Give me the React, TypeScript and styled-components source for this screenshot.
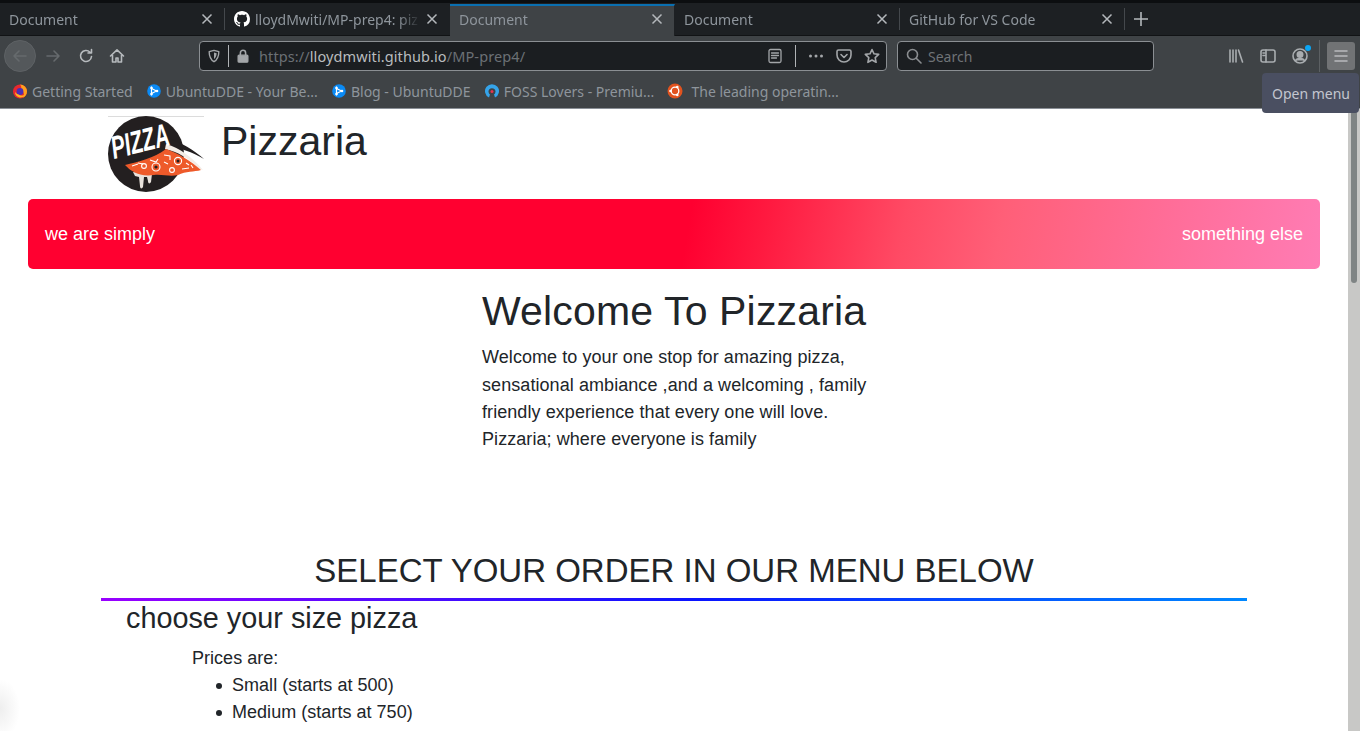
import React from 'react'
import styled, { createGlobalStyle } from 'styled-components'

const GlobalStyle = createGlobalStyle`
  html, body { margin: 0; padding: 0; height: 100%; overflow: hidden; background: #fff; }
  #root { height: 100%; }
  * { box-sizing: border-box; }
`

const Screen = styled.div`
  position: relative;
  width: 1360px;
  height: 731px;
  overflow: hidden;
  display: flex;
  flex-direction: column;
`

/* ---------- browser chrome ---------- */
const Chrome = styled.header`
  flex: none;
  height: 109px;
  background: #3f4346;
  border-bottom: 1px solid #8a8f96;
  font-family: "Noto Sans", sans-serif;
  font-size: 14px;
  color: #8e959c;
`
const TopEdge = styled.div`
  height: 3px;
  background: #0c0e10;
`
const TabStrip = styled.div`
  height: 33px;
  display: flex;
  align-items: flex-start;
  background: #1d2023;
  border-bottom: 1px solid #111315;
`
const Tab = styled.div<{ $active?: boolean; $divided?: boolean }>`
  position: relative;
  flex: none;
  width: 225px;
  height: 32px;
  display: flex;
  align-items: center;
  gap: 5px;
  padding: ${p => (p.$active ? '0 11px 4px 9px' : '0 12px 0 9px')};
  background: ${p => (p.$active ? '#3f4346' : 'transparent')};
  border-top: ${p => (p.$active ? '2px solid #0a6fb0' : 'none')};
  border-right: ${p => (p.$active ? '1px solid #1d2023' : 'none')};
  margin-top: ${p => (p.$active ? '1px' : '0')};
  &::after {
    content: '';
    display: ${p => (p.$divided ? 'block' : 'none')};
    position: absolute;
    right: 0;
    top: 5px;
    bottom: 5px;
    width: 1px;
    background: #44484c;
  }
`
const TabTitle = styled.span`
  flex: 1;
  white-space: nowrap;
  overflow: hidden;
  -webkit-mask-image: linear-gradient(to right, #000 86%, transparent);
  mask-image: linear-gradient(to right, #000 86%, transparent);
`
const CloseIcon = styled.svg`
  flex: none;
  width: 12px;
  height: 12px;
  stroke: #b4b8bc;
  stroke-width: 1.5;
  fill: none;
`
const NewTab = styled.div`
  width: 32px;
  height: 32px;
  display: flex;
  align-items: center;
  justify-content: center;
  svg { width: 16px; height: 16px; stroke: #b4b8bc; stroke-width: 1.6; fill: none; }
`
const Toolbar = styled.div`
  height: 36px;
  display: flex;
  align-items: center;
  padding: 4px 5px 0 4px;
`
const BackCircle = styled.div`
  flex: none;
  width: 32px;
  height: 32px;
  border-radius: 50%;
  background: #54585b;
  border: 1px solid #5e6265;
  display: flex;
  align-items: center;
  justify-content: center;
`
const NavIcon = styled.svg<{ $dim?: boolean }>`
  flex: none;
  width: 16px;
  height: 16px;
  fill: none;
  stroke: ${p => (p.$dim ? '#666a6d' : '#b6babd')};
  stroke-width: 1.6;
  stroke-linecap: round;
  stroke-linejoin: round;
`
const NavSlot = styled.div<{ $w: number }>`
  flex: none;
  width: ${p => p.$w}px;
  display: flex;
  justify-content: center;
`
const UrlBar = styled.div`
  flex: none;
  width: 688px;
  height: 30px;
  margin-left: 66px;
  background: #1b1e21;
  border: 1px solid #8b8f93;
  border-radius: 4px;
  display: flex;
  align-items: center;
  padding: 0 5px 0 7px;
`
const UrlDivider = styled.span`
  flex: none;
  width: 1px;
  height: 22px;
  background: #b0b3b6;
`
const UrlText = styled.span`
  flex: 1;
  font-size: 14.5px;
  color: #6b7075;
  margin-left: 9px;
  white-space: nowrap;
  letter-spacing: 0.1px;
  b { font-weight: 400; color: #b9bcbf; }
`
const SearchBar = styled.div`
  flex: none;
  width: 257px;
  height: 30px;
  margin-left: 10px;
  background: #1b1e21;
  border: 1px solid #8b8f93;
  border-radius: 4px;
  display: flex;
  align-items: center;
  gap: 6px;
  padding: 0 8px;
  color: #6f7377;
`
const ToolGroup = styled.div`
  flex: 1;
  display: flex;
  align-items: center;
  justify-content: flex-end;
  height: 100%;
`
const BadgeWrap = styled.div`
  position: relative;
  display: flex;
`
const Badge = styled.span`
  position: absolute;
  top: -3px;
  right: -3px;
  width: 6px;
  height: 6px;
  border-radius: 50%;
  background: #0aa5f5;
`
const ToolDivider = styled.span`
  width: 1px;
  height: 32px;
  margin-left: 11px;
  background: #5c6063;
`
const MenuButton = styled.div`
  width: 28px;
  height: 28px;
  margin-left: 7px;
  border-radius: 3px;
  background: #717375;
  display: flex;
  align-items: center;
  justify-content: center;
`
const Bookmarks = styled.div`
  height: 36px;
  display: flex;
  align-items: center;
  padding: 2px 0 0 12px;
  gap: 13.2px;
`
const Bookmark = styled.div<{ $gap: number }>`
  display: flex;
  align-items: center;
  gap: ${p => p.$gap}px;
  white-space: nowrap;
  svg { flex: none; width: 16px; height: 16px; }
`
const Tooltip = styled.div`
  position: absolute;
  left: 1262px;
  top: 73px;
  width: 97px;
  height: 40px;
  background: #4a4f61;
  border-radius: 4px;
  color: #c3c6cf;
  font-family: "Noto Sans", sans-serif;
  font-size: 14px;
  display: flex;
  align-items: center;
  padding-left: 10px;
`

/* ---------- page ---------- */
const Viewport = styled.div`
  flex: 1;
  min-height: 0;
  display: flex;
  background: #fff;
`
const Page = styled.main`
  flex: 1;
  min-width: 0;
  overflow: hidden;
  font-family: "Liberation Sans", Arial, sans-serif;
  color: #212529;
`
const Brand = styled.div`
  height: 90px;
  display: flex;
  margin-left: 108px;
  gap: 17px;
`
const Logo = styled.svg`
  flex: none;
  width: 96px;
  height: 78px;
  margin-top: 7px;
  overflow: visible;
`
const BrandName = styled.h1`
  margin: 8px 0 0;
  font-size: 41px;
  font-weight: 400;
  line-height: 48px;
`
const Banner = styled.div`
  height: 70px;
  margin: 0 28px;
  padding: 0 17px;
  border-radius: 5px;
  background: linear-gradient(100deg, #ff0030 0%, #ff0030 51%, #ff1a40 57%, #ff4a64 67.5%, #ff5f78 75%, #ff6d98 87.6%, #ff7cb4 100%);
  display: flex;
  align-items: center;
  justify-content: space-between;
  color: #fff;
  font-size: 18px;
`
const Welcome = styled.section`
  width: 400px;
  margin: 18px 0 0 482px;
`
const WelcomeTitle = styled.h2`
  margin: 0 0 9.3px;
  font-size: 41px;
  font-weight: 400;
  line-height: 48px;
  letter-spacing: 0.15px;
`
const WelcomeText = styled.p`
  margin: 0;
  width: 392px;
  font-size: 18px;
  line-height: 27.3px;
  letter-spacing: 0.07px;
`
const MenuTitle = styled.h2`
  margin: 96.7px 0 0;
  text-align: center;
  font-size: 33px;
  font-weight: 400;
  line-height: 42px;
`
const Rule = styled.div`
  height: 3px;
  margin: 6px 0 0 101px;
  width: 1146px;
  background: linear-gradient(to right, #9900ff, #0a14ff 52%, #0088ff);
`
const SizeTitle = styled.h3`
  margin: 0 0 0 126px;
  font-size: 28.8px;
  font-weight: 400;
  line-height: 34px;
`
const Prices = styled.div`
  margin: 10px 0 0 192px;
  font-size: 18px;
  line-height: 27px;
  letter-spacing: 0.03px;
`
const PriceList = styled.ul`
  margin: 0;
  padding-left: 40px;
  list-style: none;
`
const PriceItem = styled.li`
  position: relative;
  &::before {
    content: '';
    position: absolute;
    left: -16px;
    top: 10.5px;
    width: 6px;
    height: 6px;
    border-radius: 50%;
    background: #212529;
  }
`
const Scrollbar = styled.div`
  flex: none;
  width: 12px;
  background: #c8c8c6;
  padding: 2px 3px 0;
`
const ScrollThumb = styled.div`
  height: 172px;
  border-radius: 3px;
  background: #7f8484;
`
const CornerGlow = styled.div`
  position: absolute;
  left: -20px;
  bottom: -8px;
  width: 40px;
  height: 60px;
  border-radius: 50%;
  background: radial-gradient(closest-side, #eeeeee, #ffffff);
`

const Close = () => (
  <CloseIcon viewBox="0 0 12 12">
    <path d="M1.5 1.5l9 9M10.5 1.5l-9 9" />
  </CloseIcon>
)

const GithubMark = () => (
  <svg viewBox="0 0 16 16" width="16" height="16" fill="#fff" style={{ flex: 'none' }}>
    <path d="M8 0C3.58 0 0 3.58 0 8c0 3.54 2.29 6.53 5.47 7.59.4.07.55-.17.55-.38 0-.19-.01-.82-.01-1.49-2.01.37-2.53-.49-2.69-.94-.09-.23-.48-.94-.82-1.13-.28-.15-.68-.52-.01-.53.63-.01 1.08.58 1.23.82.72 1.21 1.87.87 2.33.66.07-.52.28-.87.51-1.07-1.78-.2-3.64-.89-3.64-3.95 0-.87.31-1.59.82-2.15-.08-.2-.36-1.02.08-2.12 0 0 .67-.21 2.2.82.64-.18 1.32-.27 2-.27s1.36.09 2 .27c1.53-1.04 2.2-.82 2.2-.82.44 1.1.16 1.92.08 2.12.51.56.82 1.27.82 2.15 0 3.07-1.87 3.75-3.65 3.95.29.25.54.73.54 1.48 0 1.07-.01 1.93-.01 2.2 0 .21.15.46.55.38A8.01 8.01 0 0 0 16 8c0-4.42-3.58-8-8-8z" />
  </svg>
)

const Firefox = () => (
  <svg viewBox="0 0 16 16">
    <circle cx="8" cy="8.5" r="7" fill="#e8282e" />
    <path d="M8 1.5a7 7 0 0 1 7 7c0 3-2 5.500-4.500 6.300C13 12 12 8.500 9 7 9.500 5 9.500 3 8 1.500z" fill="#ff9f1c" />
    <circle cx="8" cy="8.500" r="3.400" fill="#4a2fb5" />
    <path d="M3 9c0 3 2.500 5.500 5.500 5.500 2 0 4-1.200 4.500-3-1 1-3 1.500-5 .7C6 11.500 4 10.500 3 9z" fill="#ffb320" />
  </svg>
)

const Deepin = () => (
  <svg viewBox="0 0 16 16">
    <circle cx="8" cy="8" r="6.800" fill="#0a8af5" />
    <path d="M5.500 3.500v9M5.500 5.500l5 2.500-5 2.500" stroke="#fff" strokeWidth="1.200" fill="none" />
    <circle cx="5.500" cy="5" r="1.300" fill="#fff" />
    <circle cx="5.500" cy="11" r="1.300" fill="#fff" />
    <circle cx="11" cy="8" r="1.300" fill="#fff" />
  </svg>
)

const Foss = () => (
  <svg viewBox="0 0 16 16">
    <path d="M5 14.500A7 7 0 1 1 11 14.500L10 11.500A3.500 3.500 0 1 0 6 11.500z" fill="#35a4ea" />
    <circle cx="8" cy="8.500" r="1.500" fill="#e8344e" />
  </svg>
)

const Ubuntu = () => (
  <svg viewBox="0 0 16 16">
    <circle cx="8" cy="8" r="7.500" fill="#e2531f" />
    <circle cx="8" cy="8" r="3.800" fill="none" stroke="#fff" strokeWidth="1.300" />
    <circle cx="3.500" cy="8" r="1.300" fill="#fff" />
    <circle cx="10.300" cy="4" r="1.300" fill="#fff" />
    <circle cx="10.300" cy="12" r="1.300" fill="#fff" />
  </svg>
)

const tabs = ['Document', 'lloydMwiti/MP-prep4: piz', 'Document', 'Document', 'GitHub for VS Code']
const bookmarks = [
  { icon: <Firefox />, label: 'Getting Started', gap: 4 },
  { icon: <Deepin />, label: 'UbuntuDDE - Your Be...', gap: 4 },
  { icon: <Deepin />, label: 'Blog - UbuntuDDE', gap: 4 },
  { icon: <Foss />, label: 'FOSS Lovers - Premiu...', gap: 4 },
  { icon: <Ubuntu />, label: 'The leading operatin...', gap: 8 },
]

const PizzaLogo = () => (
  <Logo viewBox="0 0 96 78">
    <rect x="0" y="0" width="96" height="1" fill="#dcdcdc" />
    <circle cx="38" cy="38" r="38" fill="#231f20" />
    {/* crust tail */}
    <path d="M60 22 C74 27 86 34 96 43 C84 36 72 32 62 30 Z" fill="#231f20" />
    <path d="M58 28 C72 32 85 42 95 54 C92 53 90 52 88 50 C80 42 70 36 57 33 Z" fill="#f3ece6" />
    {/* cheese drips */}
    <path d="M25 56 L44 58 L43 66 C42 68 40 68 40 65 L39 61 L36 61 L35 71 C34 73 32 73 32 70 L31 61 L27 60 Z" fill="#e8e2dc" />
    {/* slice */}
    <path d="M17 49 C30 46 46 42 58 33 C70 37 83 45 93 54 C86 56 78 55 70 59 C62 61 54 58 46 59 C38 60 31 59 26 56 C22 54 20 52 17 49 Z" fill="#ee5a2a" />
    <g fill="none" stroke="#fff" strokeWidth="1.100">
      <circle cx="48" cy="51" r="4" />
      <circle cx="64" cy="54" r="2.400" />
      <circle cx="36" cy="50" r="2.400" />
      <circle cx="70" cy="45" r="3.600" />
      <path d="M24 50l6-2M30 47l5 1M42 44l6 2 2-3M56 39l6 1 0 4M74 53l7-1M83 49l2 3M56 46l4 2M78 47l3 2" />
    </g>
    <g fill="#231f20">
      <circle cx="48" cy="51" r="1.600" />
      <circle cx="70" cy="45" r="1.500" />
    </g>
    <text
      x="6"
      y="43"
      transform="rotate(-14 6 43)"
      fontFamily='"Liberation Sans", Arial, sans-serif'
      fontSize="32"
      fontWeight="700"
      fontStyle="italic"
      fill="#fff"
      textLength="59"
      lengthAdjust="spacingAndGlyphs"
    >
      PIZZA
    </text>
  </Logo>
)

export default function App() {
  return (
    <Screen>
      <GlobalStyle />
      <Chrome>
        <TopEdge />
        <TabStrip>
          {tabs.map((title, i) => (
            <Tab key={i} $active={i === 2} $divided={i !== 2 && i !== 1}>
              {i === 1 && <GithubMark />}
              <TabTitle>{title}</TabTitle>
              <Close />
            </Tab>
          ))}
          <NewTab>
            <svg viewBox="0 0 16 16"><path d="M8 1v14M1 8h14" /></svg>
          </NewTab>
        </TabStrip>
        <Toolbar>
          <BackCircle>
            <NavIcon $dim viewBox="0 0 16 16"><path d="M14 8H2M7 3L2 8l5 5" /></NavIcon>
          </BackCircle>
          <NavSlot $w={34}>
            <NavIcon $dim viewBox="0 0 16 16"><path d="M2 8h12M9 3l5 5-5 5" /></NavIcon>
          </NavSlot>
          <NavSlot $w={31}>
            <NavIcon viewBox="0 0 16 16"><path d="M13.500 8.500A5.500 5.500 0 1 1 12 4.200M13.500 1.500v3.500H10" /></NavIcon>
          </NavSlot>
          <NavSlot $w={32}>
            <NavIcon viewBox="0 0 16 16"><path d="M1.500 8L8 1.800 14.500 8M3.500 7v7h3.500v-4h2v4h3.500V7" /></NavIcon>
          </NavSlot>
          <UrlBar>
            <NavIcon viewBox="0 0 16 16" style={{ width: 14, height: 14, stroke: '#a3a6a9' }}>
              <path d="M8 1.500l5.500 1.500c0 5-1.500 9-5.500 11.500C4 12 2.500 8 2.500 3z" />
              <path d="M8 4l3 .8c0 3-1 5-3 6.700z" fill="#a3a6a9" stroke="none" />
            </NavIcon>
            <UrlDivider style={{ marginLeft: 7 }} />
            <NavIcon viewBox="0 0 16 16" style={{ marginLeft: 7, width: 14, height: 14, stroke: '#a3a6a9', fill: '#a3a6a9' }}>
              <rect x="2.500" y="7" width="11" height="8" rx="1" />
              <path d="M5 7V4.500a3 3 0 0 1 6 0V7" fill="none" strokeWidth="1.800" />
            </NavIcon>
            <UrlText>https://<b>lloydmwiti.github.io</b>/MP-prep4/</UrlText>
            <NavIcon viewBox="0 0 16 16" style={{ stroke: '#a3a6a9', strokeWidth: 1.300 }}>
              <rect x="2" y="1.500" width="12" height="13" rx="1.500" />
              <path d="M4.500 5h7M4.500 7.500h7M4.500 10h5" />
            </NavIcon>
            <UrlDivider style={{ marginLeft: 12, marginRight: 12 }} />
            <svg viewBox="0 0 16 16" width="16" height="16" fill="#a3a6a9" style={{ flex: 'none' }}>
              <circle cx="2.500" cy="8" r="1.500" /><circle cx="8" cy="8" r="1.500" /><circle cx="13.500" cy="8" r="1.500" />
            </svg>
            <NavIcon viewBox="0 0 16 16" style={{ marginLeft: 12, stroke: '#a3a6a9' }}>
              <path d="M2.500 2h11A1.500 1.500 0 0 1 15 3.500V7a7 7 0 0 1-14 0V3.500A1.500 1.500 0 0 1 2.500 2z" />
              <path d="M5 6.500L8 9.500l3-3" />
            </NavIcon>
            <NavIcon viewBox="0 0 16 16" style={{ marginLeft: 12, marginRight: 1, stroke: '#a3a6a9' }}>
              <path d="M8 1.500l2 4.300 4.700.6-3.500 3.200.9 4.700L8 12l-4.100 2.300.9-4.700L1.300 6.400 6 5.800z" />
            </NavIcon>
          </UrlBar>
          <SearchBar>
            <NavIcon viewBox="0 0 16 16" style={{ stroke: '#8a8d90' }}>
              <circle cx="6.500" cy="6.500" r="5" /><path d="M10.500 10.500l4.500 4.500" />
            </NavIcon>
            Search
          </SearchBar>
          <ToolGroup>
            <NavIcon viewBox="0 0 16 16" style={{ stroke: '#a9adb0' }}>
              <path d="M2 2v12M5 2v12M8 2v12M10.500 2l4 12" />
            </NavIcon>
            <NavIcon viewBox="0 0 16 16" style={{ marginLeft: 16, stroke: '#a9adb0' }}>
              <rect x="1" y="2" width="14" height="12" rx="2" /><path d="M6 2v12M3 5h1.500M3 7.500h1.500" />
            </NavIcon>
            <BadgeWrap style={{ marginLeft: 16 }}>
              <NavIcon viewBox="0 0 16 16" style={{ stroke: '#a9adb0' }}>
                <circle cx="8" cy="8" r="7" /><circle cx="8" cy="6.500" r="2.700" fill="#a9adb0" />
                <path d="M3.500 12.500C5 10 11 10 12.500 12.500" fill="#a9adb0" />
              </NavIcon>
              <Badge />
            </BadgeWrap>
            <ToolDivider />
            <MenuButton>
              <NavIcon viewBox="0 0 16 16" style={{ stroke: '#b9bbbd', strokeWidth: 1.500 }}>
                <path d="M2 3h12M2 8h12M2 13h12" />
              </NavIcon>
            </MenuButton>
          </ToolGroup>
        </Toolbar>
        <Bookmarks>
          {bookmarks.map(b => (
            <Bookmark key={b.label} $gap={b.gap}>
              {b.icon}
              {b.label}
            </Bookmark>
          ))}
        </Bookmarks>
      </Chrome>
      <Viewport>
        <Page>
          <Brand>
            <PizzaLogo />
            <BrandName>Pizzaria</BrandName>
          </Brand>
          <Banner>
            <span>we are simply</span>
            <span>something else</span>
          </Banner>
          <Welcome>
            <WelcomeTitle>Welcome To Pizzaria</WelcomeTitle>
            <WelcomeText>
              Welcome to your one stop for amazing pizza,<br />
              sensational ambiance ,and a welcoming , family<br />
              friendly experience that every one will love.<br />
              Pizzaria; where everyone is family
            </WelcomeText>
          </Welcome>
          <MenuTitle>SELECT YOUR ORDER IN OUR MENU BELOW</MenuTitle>
          <Rule />
          <SizeTitle>choose your size pizza</SizeTitle>
          <Prices>
            Prices are:
            <PriceList>
              <PriceItem>Small (starts at 500)</PriceItem>
              <PriceItem>Medium (starts at 750)</PriceItem>
            </PriceList>
          </Prices>
        </Page>
        <Scrollbar>
          <ScrollThumb />
        </Scrollbar>
      </Viewport>
      <Tooltip>Open menu</Tooltip>
      <CornerGlow />
    </Screen>
  )
}
